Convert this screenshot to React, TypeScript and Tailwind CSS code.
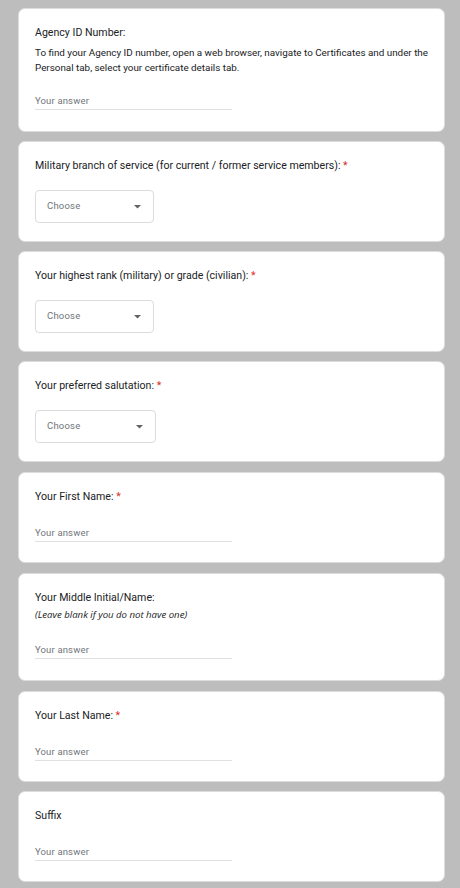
import React from "react";

const Req = () => <span className="text-[#d93025]"> *</span>;

function Card({ children, className = "" }: { children: React.ReactNode; className?: string }) {
  return (
    <div className={`bg-white rounded-[7px] border border-[#dadce0] px-[16px] pt-[16px] ${className}`}>
      {children}
    </div>
  );
}

function Title({ text, req }: { text: string; req?: boolean }) {
  return (
    <div className="text-[10.6px] leading-[16px] text-[#202124]">
      {text}
      {req && <Req />}
    </div>
  );
}

function Answer({ mt }: { mt: string }) {
  return (
    <div className={`${mt} w-[197px] border-b border-[#e0e0e0] pb-[1px] text-[9.5px] leading-[14px] text-[#70757a] tracking-[0.15px]`}>
      Your answer
    </div>
  );
}

function Choose({ w }: { w: string }) {
  return (
    <div className={`${w} mt-[16px] h-[33px] rounded-[4px] border border-[#dadce0] flex items-center justify-between pl-[11px] pr-[12px]`}>
      <span className="text-[9.5px] text-[#70757a] tracking-[0.2px]">Choose</span>
      <svg width="7" height="4" viewBox="0 0 7 4">
        <path d="M0 0 L7 0 L3.5 3.5 Z" fill="#5f6368" />
      </svg>
    </div>
  );
}

export default function App() {
  return (
    <div className="min-h-[888px] bg-[#bdbdbd] pl-[18px] pr-[15px] pt-[8px] pb-[6px] flex flex-col gap-[9px]" style={{ fontFamily: "Roboto, 'Liberation Sans', sans-serif" }}>
      <Card>
        <div className="pb-[21px]">
          <Title text="Agency ID Number:" />
          <div className="mt-[4px] text-[9.85px] leading-[15px] text-[#202124]">
            To find your Agency ID number, open a web browser, navigate to Certificates and under the Personal tab, select your certificate details tab.
          </div>
          <Answer mt="mt-[19px]" />
        </div>
      </Card>
      <Card>
        <div className="pb-[18px]">
          <Title text="Military branch of service (for current / former service members):" req />
          <Choose w="w-[119px]" />
        </div>
      </Card>
      <Card>
        <div className="pb-[18px]">
          <Title text="Your highest rank (military) or grade (civilian):" req />
          <Choose w="w-[119px]" />
        </div>
      </Card>
      <Card>
        <div className="pb-[18px]">
          <Title text="Your preferred salutation:" req />
          <Choose w="w-[121px]" />
        </div>
      </Card>
      <Card className="mt-[1px]">
        <div className="pb-[20px]">
          <Title text="Your First Name:" req />
          <Answer mt="mt-[21px]" />
        </div>
      </Card>
      <Card className="mt-[1px]">
        <div className="pb-[21px]">
          <Title text="Your Middle Initial/Name:" />
          <div className="mt-[2px] text-[9.6px] leading-[14px] italic text-[#202124]" style={{ fontFamily: "'Open Sans', sans-serif" }}>
            (Leave blank if you do not have one)
          </div>
          <Answer mt="mt-[21px]" />
        </div>
      </Card>
      <Card className="mt-[1px]">
        <div className="pb-[20px]">
          <Title text="Your Last Name:" req />
          <Answer mt="mt-[21px]" />
        </div>
      </Card>
      <Card>
        <div className="pb-[20px]">
          <Title text="Suffix" />
          <Answer mt="mt-[21px]" />
        </div>
      </Card>
    </div>
  );
}
